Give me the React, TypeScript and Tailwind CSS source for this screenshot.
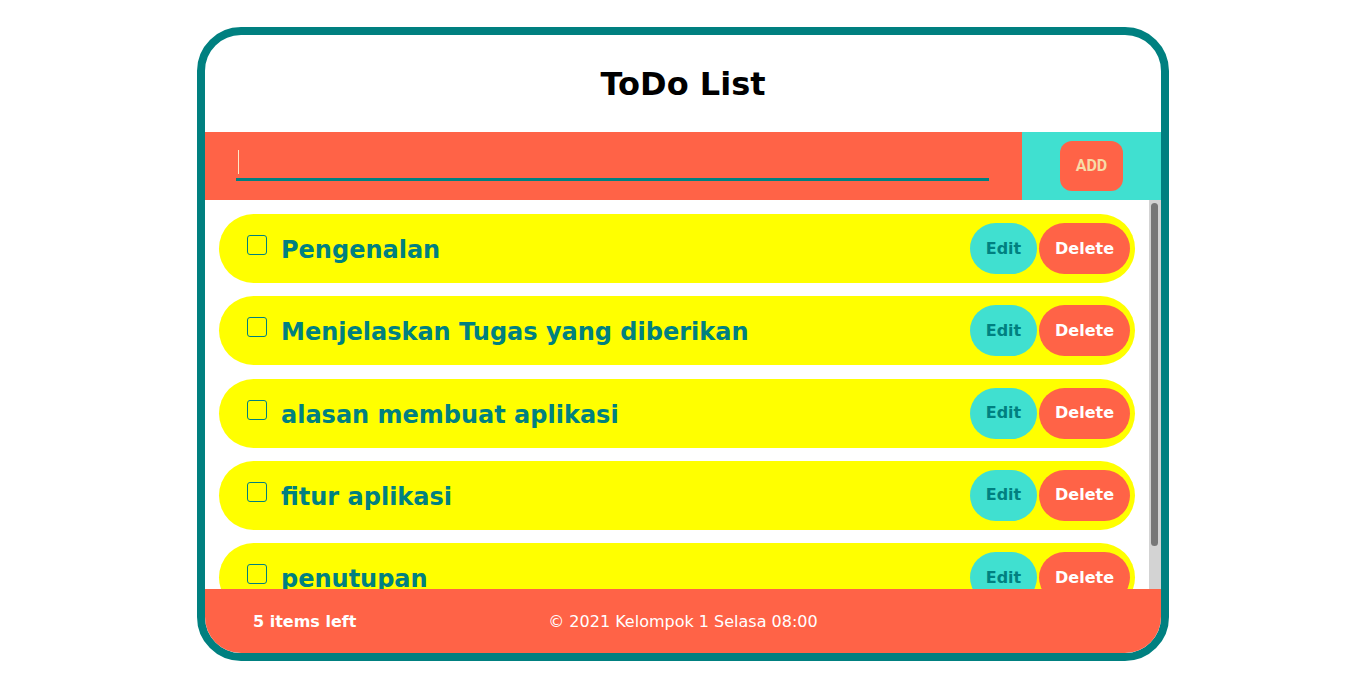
// ToDo list card — header, add bar, scrollable items, footer
import { useState } from 'react';

interface Todo {
  id: number;
  text: string;
  done: boolean;
}

const initialTodos: Todo[] = [
  { id: 1, text: 'Pengenalan', done: false },
  { id: 2, text: 'Menjelaskan Tugas yang diberikan', done: false },
  { id: 3, text: 'alasan membuat aplikasi', done: false },
  { id: 4, text: 'fitur aplikasi', done: false },
  { id: 5, text: 'penutupan', done: false },
];

export default function App() {
  const [todos, setTodos] = useState<Todo[]>(initialTodos);
  const [draft, setDraft] = useState('');

  const left = todos.filter((t) => !t.done).length;

  const addTodo = () => {
    if (!draft.trim()) return;
    setTodos([...todos, { id: Date.now(), text: draft.trim(), done: false }]);
    setDraft('');
  };

  return (
    <div className="min-h-screen bg-white pt-[27px] font-['DejaVu_Sans',sans-serif]">
      <div className="mx-auto flex h-[634px] w-[972px] flex-col overflow-hidden rounded-[44px] border-[8px] border-[#008080] bg-white">
        {/* Header */}
        <div className="flex h-[97px] shrink-0 items-center justify-center">
          <h1 className="text-[32px] font-bold leading-none text-black">ToDo List</h1>
        </div>

        {/* Add bar */}
        <div className="flex h-[68px] shrink-0">
          <div className="flex flex-1 items-center bg-[#ff6347] pl-[31px] pr-[33px]">
            <div className="relative w-full border-b-[3px] border-[#008080] pt-[2px]">
              <input
                value={draft}
                onChange={(e) => setDraft(e.target.value)}
                className="h-[24px] w-full bg-transparent pl-[3px] text-[16px] text-white outline-none"
              />
              {draft === '' && (
                <span className="pointer-events-none absolute left-[2px] top-[-2px] h-[24px] w-px bg-[#fde8c8]" />
              )}
            </div>
          </div>
          <div className="flex w-[139px] items-center justify-center bg-[#40e0d0]">
            <button
              onClick={addTodo}
              className="h-[50px] w-[63px] rounded-[12px] bg-[#ff6347] font-['Roboto',sans-serif] text-[16px] font-bold text-[#f7dba7]"
            >
              ADD
            </button>
          </div>
        </div>

        {/* Items + scrollbar track */}
        <div className="flex min-h-0 flex-1">
          <div className="min-h-0 flex-1 overflow-hidden px-[14px] pt-[14px]">
            <div className="flex flex-col gap-[13.3px]">
              {todos.map((todo) => (
                <div
                  key={todo.id}
                  className="flex h-[69px] shrink-0 items-center rounded-full bg-[#ffff00] pl-[28px] pr-[5px]"
                >
                  <input
                    type="checkbox"
                    checked={todo.done}
                    onChange={() =>
                      setTodos(todos.map((t) => (t.id === todo.id ? { ...t, done: !t.done } : t)))
                    }
                    className="mb-[7px] h-[20px] w-[20px] shrink-0 appearance-none rounded-[3px] border border-[#008080] checked:bg-[#008080]"
                  />
                  <span className="ml-[14px] mt-[3px] flex-1 text-[24px] font-bold text-[#008080]">{todo.text}</span>
                  <button className="h-[51px] w-[67px] rounded-full bg-[#40e0d0] text-[16px] font-bold text-[#008080]">
                    Edit
                  </button>
                  <button
                    onClick={() => setTodos(todos.filter((t) => t.id !== todo.id))}
                    className="ml-[2px] h-[51px] w-[91px] rounded-full bg-[#ff6347] text-[16px] font-bold text-white"
                  >
                    Delete
                  </button>
                </div>
              ))}
            </div>
          </div>
          <div className="w-[12px] shrink-0 bg-[#d3d3d3] pb-[43px] pl-[2px] pr-[3px] pt-[3px]">
            <div className="h-full w-full rounded-full bg-[#777777]" />
          </div>
        </div>

        {/* Footer */}
        <div className="grid h-[64px] shrink-0 grid-cols-3 items-center bg-[#ff6347] pt-[2px] text-[16px] text-white">
          <span className="pl-[48px] font-bold">{left} items left</span>
          <span className="text-center">© 2021 Kelompok 1 Selasa 08:00</span>
          <span />
        </div>
      </div>
    </div>
  );
}
